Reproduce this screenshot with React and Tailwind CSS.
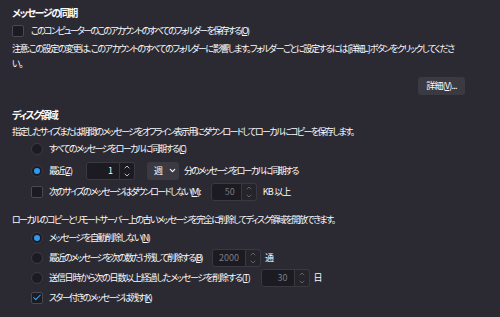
import { ChevronUp, ChevronDown, Check } from 'lucide-react';

const font = { fontFamily: '"Noto Sans CJK JP", "Noto Sans", sans-serif' };

const Checkbox = ({ checked = false }) => (
    <span className="flex h-[12px] w-[12px] shrink-0 items-center justify-center rounded-[2px] border border-[#4a4953] bg-[#1c1b22]">
        {checked && <Check className="h-[11px] w-[11px] text-[#3ba7ff]" strokeWidth={2.5} />}
    </span>
);

const Radio = ({ checked = false }) => (
    <span className="flex h-[12px] w-[12px] shrink-0 items-center justify-center rounded-full border border-[#3c3b44] bg-[#1c1b22]">
        {checked && <span className="h-[6px] w-[6px] rounded-full bg-[#2b9af3]" />}
    </span>
);

const NumberBox = ({ value, width, disabled = false }) => (
    <div className="flex h-[18px] items-stretch tracking-normal">
        <div
            className={`flex items-center justify-end rounded-l-[3px] border border-[#3a3942] bg-[#1c1b22] pr-[6px] ${disabled ? 'text-[#7d7c85]' : 'text-[#fbfbfe]'}`}
            style={{ width }}
        >
            {value}
        </div>
        <div className={`flex w-[15px] flex-col items-center justify-center rounded-r-[3px] border border-l-0 border-[#3a3942] ${disabled ? 'bg-[#25242b] text-[#6d6c75]' : 'bg-[#1c1b22] text-[#d8d8de]'}`}>
            <ChevronUp className="h-[8px] w-[8px]" strokeWidth={2.5} />
            <ChevronDown className="h-[8px] w-[8px]" strokeWidth={2.5} />
        </div>
    </div>
);

const Row = ({ children, className = '' }) => (
    <div className={`flex items-center whitespace-nowrap ${className}`}>{children}</div>
);

export default function App() {
    return (
        <div
            className="h-[317px] w-[500px] overflow-hidden bg-[#2b2a33] pl-[12px] text-[9px] tracking-[-1.4px] text-[#fbfbfe] [font-feature-settings:'palt'_1]"
            style={font}
        >
            <div className="pt-[5px] text-[10px] font-bold leading-[15px]">メッセージの同期</div>

            <Row className="mt-[4px] gap-[7px]">
                <Checkbox />
                <span className="tracking-[-1.7px]">このコンピューターのこのアカウントのすべてのフォルダーを保存する(<u>O</u>)</span>
            </Row>

            <div className="mt-[3px] whitespace-nowrap leading-[15px]">
                注意: この設定の変更は、このアカウントのすべてのフォルダーに影響します。フォルダーごとに設定するには [詳細...] ボタンをクリックしてくださ
                <br />
                い。
            </div>

            <div className="mt-[6px] flex justify-end pr-[35px]">
                <button className="h-[18px] w-[47px] rounded-[3px] bg-[#3b3a43] text-[9px] text-[#fbfbfe] tracking-[-0.8px]">
                    詳細(<u>V</u>)...
                </button>
            </div>

            <div className="mt-[12px] text-[10px] font-bold leading-[15px] tracking-[-1.7px]">ディスク領域</div>
            <div className="mt-[2px] whitespace-nowrap leading-[15px] tracking-[-1.6px]">指定したサイズまたは期間のメッセージをオフライン表示用にダウンロードしてローカルにコピーを保存します。</div>

            <div className="ml-[19px] mt-[1px] flex flex-col">
                <Row className="h-[18px] gap-[6px]">
                    <Radio />
                    <span className="tracking-[-1.6px]">すべてのメッセージをローカルに同期する(<u>C</u>)</span>
                </Row>
                <Row className="mt-[3px] h-[20px]">
                    <Radio checked />
                    <span className="ml-[6px] w-[37px]">最近(<u>Z</u>)</span>
                    <NumberBox value="1" width="34px" />
                    <div className="ml-[12px] flex h-[18px] w-[32px] items-center gap-[6px] rounded-[3px] bg-[#3b3a43] pl-[7px]">
                        <span>週</span>
                        <ChevronDown className="h-[9px] w-[9px]" strokeWidth={3} />
                    </div>
                    <span className="ml-[5px] tracking-[-1.8px]">分のメッセージをローカルに同期する</span>
                </Row>
                <Row className="mt-[1px] h-[20px]">
                    <Checkbox />
                    <span className="ml-[6px] tracking-[-1.6px]">次のサイズのメッセージはダウンロードしない(<u>M</u>):</span>
                    <div className="ml-[11px]">
                        <NumberBox value="50" width="31px" disabled />
                    </div>
                    <span className="ml-[6px] tracking-[-0.8px]">KB 以上</span>
                </Row>
            </div>

            <div className="mt-[10px] whitespace-nowrap leading-[15px] tracking-[-1.6px]">ローカルのコピーとリモートサーバー上の古いメッセージを完全に削除してディスク領域を開放できます。</div>

            <div className="ml-[19px] mt-[1px] flex flex-col">
                <Row className="h-[20px] gap-[6px]">
                    <Radio checked />
                    <span>メッセージを自動削除しない(<u>N</u>)</span>
                </Row>
                <Row className="h-[20px]">
                    <Radio />
                    <span className="ml-[6px] tracking-[-1.6px]">最近のメッセージを次の数だけ残して削除する(<u>B</u>)</span>
                    <div className="ml-[10px]">
                        <NumberBox value="2000" width="34px" disabled />
                    </div>
                    <span className="ml-[4px]">通</span>
                </Row>
                <Row className="h-[20px]">
                    <Radio />
                    <span className="ml-[6px] tracking-[-1.2px]">送信日時から次の日数以上経過したメッセージを削除する(<u>T</u>)</span>
                    <div className="ml-[11px]">
                        <NumberBox value="30" width="34px" disabled />
                    </div>
                    <span className="ml-[4px]">日</span>
                </Row>
                <Row className="h-[20px] gap-[6px]">
                    <Checkbox checked />
                    <span className="tracking-[-1.6px]">スター付きのメッセージは残す(<u>K</u>)</span>
                </Row>
            </div>
        </div>
    );
}
